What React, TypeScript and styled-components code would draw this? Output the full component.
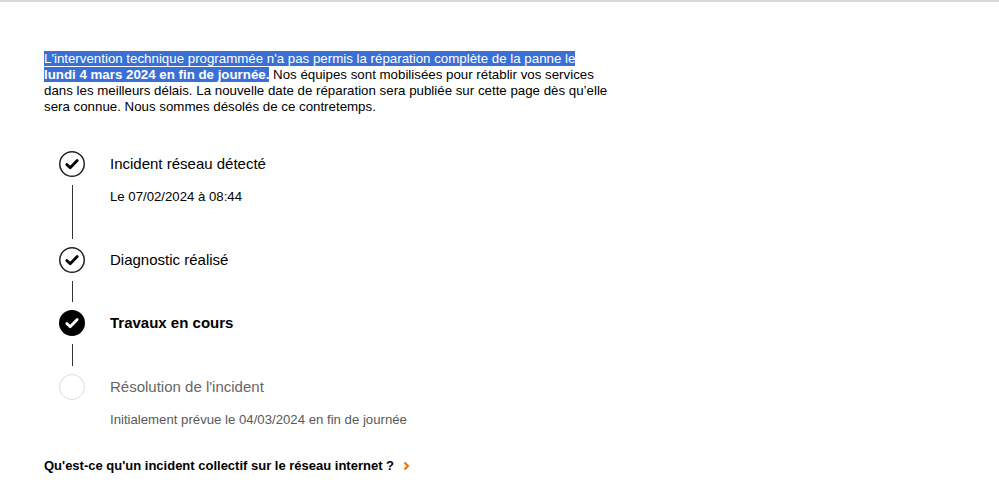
import styled, { createGlobalStyle } from 'styled-components';

const GlobalStyle = createGlobalStyle`
  html, body {
    margin: 0;
    padding: 0;
    background: #fff;
  }
  body {
    font-family: "Liberation Sans", Arial, Helvetica, sans-serif;
    color: #000;
  }
`;

const Page = styled.main`
  border-top: 2px solid #d9d9d9;
  padding: 49px 44px 20px;
  min-height: 498px;
  box-sizing: border-box;
`;

const Intro = styled.p`
  margin: 0;
  max-width: 564px;
  font-size: 13.3px;
  line-height: 16px;
  color: #000;
`;

const Highlight = styled.span<{ $bold?: boolean }>`
  background: #3a6fd5;
  color: #fff;
  font-weight: ${({ $bold }) => ($bold ? 700 : 400)};
`;

const Timeline = styled.ol`
  list-style: none;
  margin: 36px 0 0;
  padding: 0;
`;

const Step = styled.li`
  display: grid;
  grid-template-columns: 56px 1fr;
  column-gap: 10px;
`;

const Rail = styled.div`
  display: flex;
  flex-direction: column;
  align-items: center;
`;

const Connector = styled.span`
  flex: 1;
  width: 1px;
  margin: 8px 0;
  background: #333;
`;

const Body = styled.div<{ $gap: number }>`
  padding-bottom: ${({ $gap }) => $gap}px;
`;

const Title = styled.div<{ $state: StepState }>`
  font-size: 15px;
  line-height: 26px;
  font-weight: ${({ $state }) => ($state === 'current' ? 700 : 400)};
  color: ${({ $state }) => ($state === 'todo' ? '#666' : '#000')};
`;

const Sub = styled.div<{ $muted?: boolean }>`
  margin: 12px 0 5px;
  font-size: 13.2px;
  line-height: 16px;
  color: ${({ $muted }) => ($muted ? '#595959' : '#000')};
`;

const HelpLink = styled.a`
  display: inline-flex;
  align-items: center;
  gap: 9px;
  margin-top: 25px;
  font-size: 13px;
  line-height: 16px;
  font-weight: 700;
  color: #000;
  text-decoration: none;
  cursor: pointer;
`;

type StepState = 'done' | 'current' | 'todo';

function Dot({ state }: { state: StepState }) {
  if (state === 'todo') {
    return (
      <svg width="26" height="26" viewBox="0 0 26 26">
        <circle cx="13" cy="13" r="12.5" fill="#fff" stroke="#dcdcdc" strokeWidth="1" />
      </svg>
    );
  }
  const filled = state === 'current';
  return (
    <svg width="26" height="26" viewBox="0 0 26 26">
      <circle
        cx="13"
        cy="13"
        r={filled ? 13 : 12.25}
        fill={filled ? '#000' : '#fff'}
        stroke={filled ? 'none' : '#222'}
        strokeWidth="1.5"
      />
      <path
        d="M7.8 13.4 L11.2 16.8 L18.2 9.6"
        fill="none"
        stroke={filled ? '#fff' : '#000'}
        strokeWidth="2.8"
        strokeLinecap="round"
        strokeLinejoin="round"
      />
    </svg>
  );
}

function Chevron() {
  return (
    <svg width="7" height="10" viewBox="0 0 7 10">
      <path d="M1.5 1.5 L5 5 L1.5 8.5" fill="none" stroke="#f16e00" strokeWidth="2" />
    </svg>
  );
}

const steps: { title: string; sub?: string; state: StepState; gap: number }[] = [
  { title: 'Incident réseau détecté', sub: 'Le 07/02/2024 à 08:44', state: 'done', gap: 37 },
  { title: 'Diagnostic réalisé', state: 'done', gap: 37 },
  { title: 'Travaux en cours', state: 'current', gap: 38 },
  {
    title: "Résolution de l'incident",
    sub: 'Initialement prévue le 04/03/2024 en fin de journée',
    state: 'todo',
    gap: 0,
  },
];

export default function App() {
  return (
    <>
      <GlobalStyle />
      <Page>
        <Intro>
          <Highlight>
            L&apos;intervention technique programmée n&apos;a pas permis la réparation complète de la panne le{' '}
          </Highlight>
          <Highlight $bold>lundi 4 mars 2024 en fin de journée.</Highlight> Nos équipes sont mobilisées
          pour rétablir vos services dans les meilleurs délais. La nouvelle date de réparation sera
          publiée sur cette page dès qu’elle sera connue. Nous sommes désolés de ce contretemps.
        </Intro>

        <Timeline>
          {steps.map((step, i) => {
            const last = i === steps.length - 1;
            return (
              <Step key={step.title}>
                <Rail>
                  <Dot state={step.state} />
                  {!last && <Connector />}
                </Rail>
                <Body $gap={step.gap}>
                  <Title $state={step.state}>{step.title}</Title>
                  {step.sub && <Sub $muted={step.state === 'todo'}>{step.sub}</Sub>}
                </Body>
              </Step>
            );
          })}
        </Timeline>

        <HelpLink>
          Qu&apos;est-ce qu&apos;un incident collectif sur le réseau internet ?
          <Chevron />
        </HelpLink>
      </Page>
    </>
  );
}
